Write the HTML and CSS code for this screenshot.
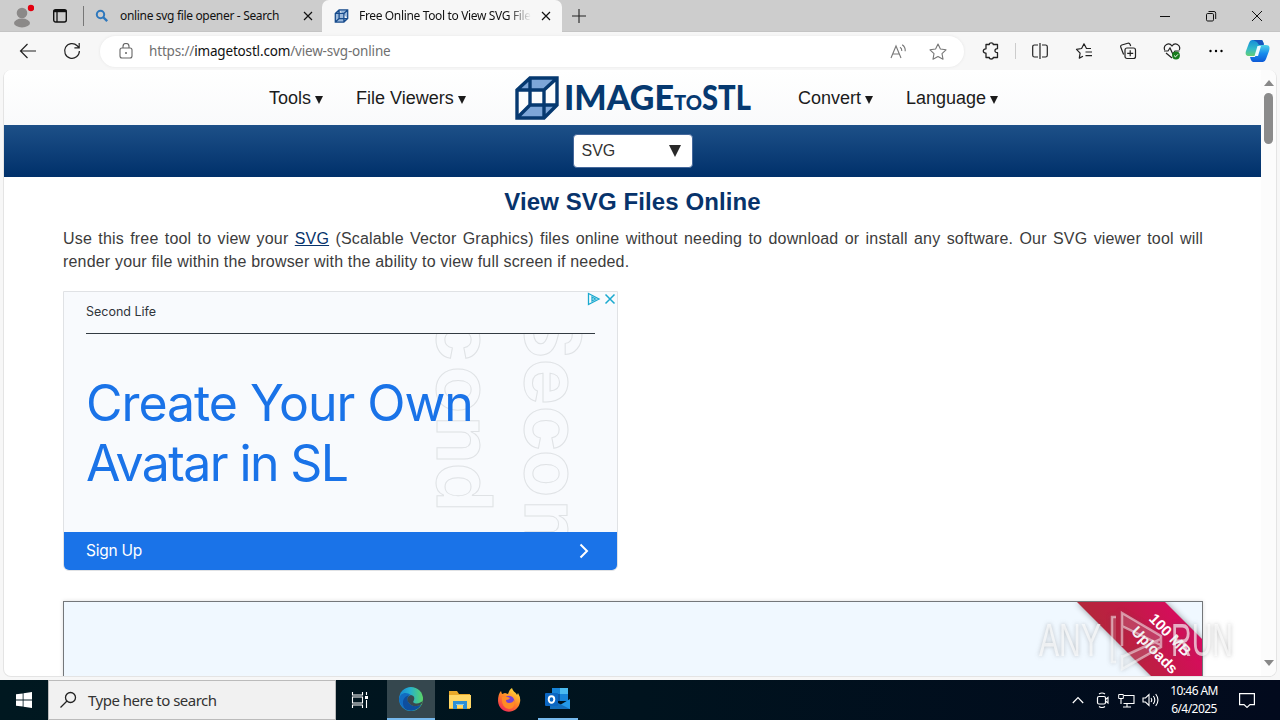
FILE: index.html
```html
<!DOCTYPE html>
<html lang="en">
<head>
<meta charset="utf-8">
<title>Free Online Tool to View SVG Files</title>
<link rel="stylesheet" href="styles.css">
</head>
<body>
<div class="screen">
  <div class="titlebar">
    <svg class="avatar" width="24" height="28" viewBox="0 0 24 28"><circle cx="12" cy="11" r="5.3" fill="#8b8988"/><ellipse cx="12" cy="21" rx="8" ry="4.4" fill="#8b8988"/><circle cx="21" cy="6" r="3.2" fill="#e3000f"/></svg>
    <svg class="workspaces" width="16" height="16" viewBox="0 0 16 16"><rect x="1.7" y="1.7" width="12.6" height="12.3" rx="2" fill="none" stroke="#111" stroke-width="1.4"/><path d="M1.500 3h13" stroke="#111" stroke-width="2.400"/><path d="M5 4v10" stroke="#111" stroke-width="1.300"/></svg>
    <div class="tab tab-idle">
      <svg width="14" height="14" viewBox="0 0 14 14"><circle cx="5.500" cy="5.500" r="3.700" fill="none" stroke="#2e78bd" stroke-width="2"/><path d="M8 8l4.200 4.200" stroke="#2e78bd" stroke-width="2.400"/></svg>
      <span class="tab-title title-search">online svg file opener - Search</span>
      <svg class="tab-x" width="10" height="10" viewBox="0 0 10 10"><path d="M1 1l8 8M9 1L1 9" stroke="#111" stroke-width="1.2"/></svg>
    </div>
    <div class="tab tab-active">
      <svg width="15" height="14" viewBox="0 0 45 44"><path d="M3 14L15 3h27v27L30 41H3zM3 14h27v27M30 14L42 3M15 3v27h27M15 30L3 41" fill="#9bb9dc" stroke="#174b8c" stroke-width="4"/></svg>
      <span class="tab-title title-svg">Free Online Tool to View SVG File</span>
      <svg class="tab-x" width="10" height="10" viewBox="0 0 10 10"><path d="M1 1l8 8M9 1L1 9" stroke="#111" stroke-width="1.2"/></svg>
    </div>
    <svg class="plus" width="14" height="14" viewBox="0 0 14 14"><path d="M7 0v14M0 7h14" stroke="#222" stroke-width="1.1"/></svg>
    <div class="window-controls">
      <svg width="12" height="12" viewBox="0 0 12 12"><path d="M1 6.5h10" stroke="#111"/></svg>
      <svg width="12" height="12" viewBox="0 0 12 12"><rect x="1.5" y="3.5" width="7" height="7.5" rx="1.2" fill="none" stroke="#111"/><path d="M3.5 1.5h5.5a1.7 1.7 0 0 1 1.7 1.7V9" fill="none" stroke="#111"/></svg>
      <svg width="12" height="12" viewBox="0 0 12 12"><path d="M1 1l10 10M11 1L1 11" stroke="#111"/></svg>
    </div>
  </div>

  <div class="toolbar">
    <svg class="back" width="18" height="16" viewBox="0 0 18 16"><path d="M17 8H2M8.5 1L1.5 8l7 7" fill="none" stroke="#222" stroke-width="1.2"/></svg>
    <svg class="reload" width="18" height="18" viewBox="0 0 18 18"><path d="M16.4 9a7.4 7.4 0 1 1-2.2-5.3L16 5.5M16.2 1v4.8h-4.8" fill="none" stroke="#222" stroke-width="1.2"/></svg>
    <div class="address">
      <svg class="lock" width="14" height="16" viewBox="0 0 14 16"><rect x="1" y="5" width="12" height="10" rx="2" fill="none" stroke="#666" stroke-width="1.1"/><path d="M4 5V3.5a3 3 0 0 1 6 0V5" fill="none" stroke="#666" stroke-width="1.1"/><circle cx="7" cy="10" r="1" fill="#666"/></svg>
      <span class="url">https://<b>imagetostl.com</b>/view-svg-online</span>
      <svg class="read" width="17" height="15" viewBox="0 0 17 15"><path d="M1 14L6 2l5 12M2.800 10h6.400M10 3.200q2 1.200 1.800 3.800M12.200 .8q3.400 2.300 3 6.500" fill="none" stroke="#777" stroke-width="1.1"/></svg>
      <svg class="star" width="18" height="17" viewBox="0 0 18 17"><path d="M9 1l2.400 5 5.600.8-4 3.900 1 5.500-5-2.600-5 2.600 1-5.500L1 6.800 6.600 6z" fill="none" stroke="#777" stroke-width="1.1" stroke-linejoin="round"/></svg>
    </div>
    <div class="tools">
      <svg width="18" height="18" viewBox="0 0 18 18"><path d="M4 2.500h3.300c-.3-2.200 4.200-2.200 3.900 0H15.500v4.200c-3.400-.2-3.400 4.200 0 4v4.800h-4.300c.3 2-4.200 2-3.900 0H4v-4.300c-3.600.3-3.600-4.700 0-4.400z" fill="none" stroke="#222" stroke-width="1.300" stroke-linejoin="round"/></svg>
      <i class="separator"></i>
      <svg width="18" height="18" viewBox="0 0 18 18"><path d="M7 3H3.500Q1.700 3 1.700 4.800v8.400Q1.700 15 3.500 15H7M11 3h3.500q1.800 0 1.800 1.800v8.400q0 1.800-1.800 1.800H11M9 1v16" fill="none" stroke="#222" stroke-width="1.2"/></svg>
      <svg width="18" height="18" viewBox="0 0 18 18"><path d="M16 6.500h-4.500L9 1.800 6.600 6.500 1.500 7.400l3.600 3.700-.8 5L8 14.200M10.500 10H17M10.500 13.600H17" fill="none" stroke="#222" stroke-width="1.2" stroke-linejoin="round"/></svg>
      <svg width="18" height="18" viewBox="0 0 18 18"><rect x="6" y="6" width="10.500" height="10.500" rx="2" fill="none" stroke="#222" stroke-width="1.200"/><path d="M11.200 8.300v6M8.200 11.300h6M4.600 12.500L1.800 5.200q-.6-1.600 1-2.200l6-1.800q1.600-.5 2.200 1l.7 1.800" fill="none" stroke="#222" stroke-width="1.200"/></svg>
      <svg width="18" height="18" viewBox="0 0 18 18"><path d="M1.700 8C-.2 3 6-.4 9 4c3-4.400 9.200-1 7.300 4M1 9h4l2-3 2.800 6L12 9h4.500M3 11l6 5" fill="none" stroke="#222" stroke-width="1.200"/><circle cx="13" cy="13.500" r="3.900" fill="#187c1d"/><path d="M11 13.500l1.500 1.400 2.500-2.600" fill="none" stroke="#fff"/></svg>
      <svg width="18" height="18" viewBox="0 0 18 18"><circle cx="3.500" cy="9" r="1.200"/><circle cx="9" cy="9" r="1.200"/><circle cx="14.500" cy="9" r="1.200"/></svg>
      <svg class="copilot" width="26" height="24" viewBox="0 0 26 24"><defs><linearGradient id="cl" x1="0" y1="0" x2="0" y2="1"><stop offset="0" stop-color="#158bd8"/><stop offset=".55" stop-color="#32baca"/><stop offset="1" stop-color="#65cf74"/></linearGradient><linearGradient id="cr" x1="0" y1="0" x2="0" y2="1"><stop offset="0" stop-color="#50d3e8"/><stop offset=".5" stop-color="#178ced"/><stop offset="1" stop-color="#0d59d7"/></linearGradient></defs><path d="M7 1h9c2 0 2 2 3 4h-4l-5 12H4c-3 0-4-2-3-5L4 4q1-3 3-3z" fill="url(#cl)"/><path d="M18 23H9c-2 0-3-1-4-5h5l4-12h7c4 0 4 3 3 6l-3 8q-1 3-3 3z" fill="url(#cr)"/><path d="M12.500 7h3.500l-3 10H9.500z" fill="#edfaff"/><path d="M8 1h8c2 0 2 2 3 5h-5l-2-3z" fill="#1755bd"/></svg>
    </div>
  </div>

  <div class="viewport">
    <main class="page">
      <nav class="nav">
        <span class="menu m-tools">Tools<i></i></span>
        <span class="menu m-files">File Viewers<i></i></span>
        <svg class="logo" width="238" height="46" viewBox="0 0 238 46">
          <path d="M3 15L16 3h28L31 15zM3 43l13-13h28L31 43z" fill="#7da6d8"/>
          <path d="M3 15L16 3h27v27L30 43H3zM3 15h27v28M30 15L43 3M16 3v27h27M16 30L3 43" fill="none" stroke="#063970" stroke-width="3.400"/>
          <text x="50" y="35" class="logo-text" textLength="110" lengthAdjust="spacingAndGlyphs">IMAGE</text>
          <text x="160" y="35" class="logo-text logo-small" textLength="28" lengthAdjust="spacingAndGlyphs">TO</text>
          <text x="188" y="35" class="logo-text" textLength="49" lengthAdjust="spacingAndGlyphs">STL</text>
        </svg>
        <span class="menu m-convert">Convert<i></i></span>
        <span class="menu m-language">Language<i></i></span>
      </nav>
      <div class="band"><div class="select"><span>SVG</span><i></i></div></div>
      <h1>View SVG Files Online</h1>
      <p class="intro">Use this free tool to view your <a>SVG</a> (Scalable Vector Graphics) files online without needing to download or install any software. Our SVG viewer tool will <span>render your file within the browser with the ability to view full screen if needed.</span></p>
      <section class="ad">
        <div class="ad-body">
          <svg class="ad-art" width="170" height="198" viewBox="430 334 170 198">
            <g class="outline"><text transform="translate(437 0) rotate(90)" x="316 366 416 463" y="0">cond</text><text transform="translate(525 0) rotate(90)" x="308 359 406 450 500" y="0">Secon</text></g>
          </svg>
          <svg class="ad-choice" width="30" height="14" viewBox="0 0 30 14"><path d="M1.500 1.500v11L12 7zM5 5v4l3.500-2z" fill="none" stroke="#19a9cf" stroke-width="1.300"/><path d="M18.500 2.500l9 9M27.500 2.500l-9 9" stroke="#19a9cf" stroke-width="1.500"/></svg>
          <div class="advertiser">Second Life</div>
          <div class="headline"><div class="h-one">Create Your Own</div><div class="h-two">Avatar in SL</div></div>
        </div>
        <div class="ad-action"><span>Sign Up</span><svg width="10" height="16" viewBox="0 0 10 16"><path d="M1.500 1.500L8 8l-6.500 6.500" fill="none" stroke="#fff" stroke-width="2"/></svg></div>
      </section>
      <section class="dropzone">
        <svg class="ribbon" width="134" height="80" viewBox="1069 602 134 80">
          <defs><linearGradient id="rb" gradientUnits="userSpaceOnUse" x1="1100" y1="660" x2="1190" y2="610"><stop offset="0" stop-color="#b02a38"/><stop offset=".45" stop-color="#c01c45"/><stop offset="1" stop-color="#dc0862"/></linearGradient></defs>
          <path class="ribbon-shape" d="M1078 602h88l37 37v43h-45z" fill="url(#rb)"/>
          <g class="ribbon-text"><text transform="translate(1167.500 638.500) rotate(46)">100 MB</text><text transform="translate(1152 653.500) rotate(46)">Uploads</text></g>
        </svg>
      </section>
    </main>
    <div class="scrollbar"><i class="up"></i><i class="thumb"></i><i class="down"></i></div>
  </div>

  <svg class="watermark" width="204" height="72" viewBox="1034 604 204 72">
    <g class="mark"><text x="1039" y="656" textLength="62" lengthAdjust="spacingAndGlyphs">ANY</text><text x="1171" y="656" textLength="62" lengthAdjust="spacingAndGlyphs">RUN</text></g>
    <path d="M1116 617h-4v45h4M1122 613l39 23v9l-39-19zM1122 613v33M1122 655v14l39-22v-8l-39 18" fill="rgba(255,255,255,.14)" stroke="rgba(255,255,255,.5)" stroke-width="2.500"/>
  </svg>

  <div class="taskbar">
    <div class="start"><svg width="16" height="16" viewBox="0 0 16 16"><path d="M0 2.300L6.700 1.400v6.200H0zM7.500 1.300L16 0v7.600H7.500zM0 8.400h6.700v6.200L0 13.700zM7.500 8.400H16V16l-8.500-1.300z" fill="#fff"/></svg></div>
    <div class="search"><svg width="18" height="18" viewBox="0 0 18 18"><circle cx="10.500" cy="6.500" r="5" fill="none" stroke="#222" stroke-width="1.300"/><path d="M7 10L.5 16.500" stroke="#222" stroke-width="1.300"/></svg><span>Type here to search</span></div>
    <div class="app"><svg width="18" height="18" viewBox="0 0 18 18"><path d="M1.500 1v3h10V1M1.500 17v-3h10v3M1.500 6h10v6h-10zM15.500 1v3M15.500 9v8" fill="none" stroke="#fff" stroke-width="1.100"/><path d="M14 5h3v3h-3z" fill="#fff"/></svg></div>
    <div class="app edge"><svg width="26" height="26" viewBox="0 0 26 26"><defs><linearGradient id="eg" x1="0" y1=".3" x2="1" y2=".3"><stop offset="0" stop-color="#1688d2"/><stop offset=".45" stop-color="#25afd0"/><stop offset="1" stop-color="#5ad566"/></linearGradient></defs><circle cx="13" cy="13" r="12" fill="url(#eg)"/><path d="M1 13C2 7 8 5 13 9c-4 0-5 5-2 8 3 4 8 4 12 1.500C20 26 3 28 1 13z" fill="#126cc0"/><path d="M7 23C2 15 7 9 13 9c-4 0-5 5-2 8 3 4 8 4 12 1.500-3 6-10 8-16 4.500z" fill="#0e4e9d"/><path d="M13 9c4 1 4 4 2 7 3 3 8 1 9.800-1.500-.3 1.800-.8 3-1.800 4-4 2.500-9 2.500-12-1.500-3-3-2-7 2-8z" fill="#39484f"/></svg></div>
    <div class="app"><svg width="22" height="20" viewBox="0 0 22 20"><path d="M0 1h8l2 3h11v15H0z" fill="#e9a929"/><path d="M0 5h22v13H0z" fill="#ffd766"/><path d="M4 11h14v8h-4v-4H8v4H4z" fill="#2d8fd6"/><path d="M7 14h8v1H7z" fill="#82c7f1"/></svg></div>
    <div class="app"><svg width="24" height="24" viewBox="0 0 24 24"><defs><linearGradient id="fg" x1=".8" y1="0" x2=".2" y2="1"><stop offset="0" stop-color="#ffe33c"/><stop offset=".5" stop-color="#ff8427"/><stop offset="1" stop-color="#f12458"/></linearGradient></defs><path d="M1 13Q1 6 4 3l1 3 3-1 3 1c1-3 2-5 4-6 1 4 4 4 5 7l1-2q3 5 2 9c-2 13-21 13-22-1z" fill="url(#fg)"/><circle cx="12" cy="13" r="5.300" fill="#7641d5"/><path d="M5 9q5-1 8 1-1 2-4 2 0 3 3 3 4 0 5-3 2 8-5 9-8-1-7-12z" fill="#ff8b25"/></svg></div>
    <div class="app outlook"><svg width="26" height="22" viewBox="0 0 26 22"><path d="M7 0h16v13H7z" fill="#1784d8"/><path d="M15 0h8v6h-8z" fill="#4abaf0"/><path d="M7 6h8v7H7z" fill="#0a57a6"/><path d="M5 11l10 6 10-6v10H5z" fill="#2499e8"/><path d="M5 11l20 10H5z" fill="#146fbd"/><rect y="5" width="13" height="13" rx="1" fill="#0b66c2"/><ellipse cx="6.500" cy="11.500" rx="2.800" ry="3.200" fill="none" stroke="#fff" stroke-width="1.900"/></svg></div>
    <div class="tray">
      <svg width="12" height="8" viewBox="0 0 12 8"><path d="M.8 7L6 1.500 11.200 7" fill="none" stroke="#fff" stroke-width="1.200"/></svg>
      <svg width="14" height="16" viewBox="0 0 14 16"><rect x="1.500" y="4.500" width="8" height="7.500" rx="1.500" fill="none" stroke="#fff" stroke-width="1.200"/><path d="M9.500 7.500L12 5.500v5.500L9.500 9M3 2q3-2 6 0M3 14.500q3 2 6 0" fill="none" stroke="#fff" stroke-width="1.100"/></svg>
      <svg width="17" height="15" viewBox="0 0 17 15"><path d="M6 2.500h10v8H5.500M5 14h8M9 10.500V14M3 6v5" fill="none" stroke="#fff" stroke-width="1.100"/><path d="M.7 1.500h4.600v4H.7z" fill="none" stroke="#fff"/></svg>
      <svg width="17" height="14" viewBox="0 0 17 14"><path d="M1 5h2.500L7 1.500v11L3.500 9H1zM9 5q1.500 2 0 4M11.300 3q3 4 0 8M13.700 1q4.500 6 0 12" fill="none" stroke="#fff" stroke-width="1.100"/></svg>
      <div class="clock"><span class="time">10:46 AM</span><span class="date">6/4/2025</span></div>
      <svg class="notice" width="16" height="16" viewBox="0 0 16 16"><path d="M.6 1.600h14.800v11H11L8 15.400 5 12.600H.6z" fill="none" stroke="#fff" stroke-width="1.200"/></svg>
    </div>
  </div>
</div>
</body>
</html>
```
FILE: styles.css
```css
* { box-sizing: border-box; }
body { margin: 0; font-family: "Liberation Sans", Arial, sans-serif; }
svg { display: block; flex: none; }
.screen { position: relative; width: 1280px; height: 720px; overflow: hidden; background: #f7f7f7; display: flex; flex-direction: column; }
.titlebar { height: 32px; flex: none; display: flex; align-items: center; background: #cdcdcd; font: 12px "Noto Sans", "Open Sans", sans-serif; border-bottom: 1px solid #c4c4c4; }
.avatar { margin-left: 10px; }
.workspaces { margin-left: 18px; }
.tab { display: flex; align-items: center; height: 32px; flex: none; }
.tab-idle { width: 239px; margin-left: 15px; padding-left: 12px; background: linear-gradient(#777, #777) left center / 1px 20px no-repeat; }
.tab-title { white-space: nowrap; color: #111; overflow: hidden; }
.title-search { width: 180px; margin-left: 11px; letter-spacing: -.33px; }
.title-svg { width: 172px; margin-left: 10px; letter-spacing: -.35px; -webkit-mask-image: linear-gradient(90deg, #000 87%, transparent); mask-image: linear-gradient(90deg, #000 87%, transparent); }
.tab-idle .tab-x { margin-left: 3px; }
.tab-active { width: 240px; padding-left: 12px; background: #f7f7f7; border-radius: 7px 7px 0 0; }
.tab-active .tab-x { margin-left: 10px; }
.plus { margin-left: 10px; }
.window-controls { display: flex; gap: 34px; margin: 0 17px 0 auto; }
.toolbar { height: 38px; flex: none; display: flex; align-items: center; }
.back { margin-left: 19px; }
.reload { margin-left: 26px; }
.address { width: 864px; height: 31px; margin-left: 19px; padding-left: 19px; display: flex; align-items: center; border-radius: 16px; background: #fff; box-shadow: 0 0 3px #e5e5e5; }
.url { width: 741px; margin-left: 16px; font: 13.500px "Noto Sans", "Open Sans", sans-serif; letter-spacing: -.17px; color: #707070; }
.url b { font-weight: 400; color: #111; }
.star { margin-left: 22px; }
.tools { display: flex; align-items: center; margin-left: 18px; }
.tools > svg { margin-right: 26px; }
.separator { width: 1px; height: 16px; background: #ccc; margin: 0 15px 0 -11px; }
.tools > .copilot { margin: 0 0 0 -6px; }

.viewport { width: 1274px; height: 607px; margin-left: 3px; flex: none; display: flex; overflow: hidden; border: 1px solid #e4e4e4; border-top: 0; border-radius: 8px; background: #fff; }
.page { width: 1257px; overflow: hidden; flex: none; }
.nav { height: 55px; display: flex; align-items: center; background: linear-gradient(#fff, #f9fafb); color: #1b1b1b; font-size: 18px; }
.menu { display: flex; align-items: center; white-space: nowrap; padding-top: 2px; }
.menu i { margin: 3px 0 0 4px; border: 4px solid transparent; border-top: 8px solid #1b1b1b; border-bottom: 0; }
.m-tools { width: 87px; margin-left: 265px; }
.m-files { width: 158px; }
.m-convert { width: 108px; margin-left: 46px; }
.logo-text { font: 900 34px Lato, sans-serif; fill: #063970; }
.logo-small { font-size: 21px; }
.band { height: 52px; display: flex; justify-content: center; align-items: center; background: linear-gradient(#1d5088, #00306a); }
.select { width: 120px; height: 34px; padding: 0 11px 0 8px; display: flex; align-items: center; justify-content: space-between; background: #fff; border: 1px solid #45689b; border-radius: 4px; color: #333; font-size: 16px; }
.select i { border: 6px solid transparent; border-top: 12px solid #292929; border-bottom: 0; }
h1 { margin: 11px 0 0; font-size: 24px; line-height: 28px; text-align: center; color: #07336b; letter-spacing: .1px; }
.intro { width: 1140px; margin: 11px 0 0 59px; font-size: 16px; line-height: 23px; color: #3c3c3c; text-align: justify; letter-spacing: .18px; }
.intro span { display: inline-block; }
.intro a { color: #07336b; text-decoration: underline; }
.ad { width: 555px; height: 280px; margin: 18px 0 0 59px; border: 1px solid #e0e2e5; border-radius: 0 0 6px 6px; overflow: hidden; background: #f8fafd; font-family: Inter, sans-serif; }
.ad-body { position: relative; height: 240px; padding: 0 22px; }
.advertiser { position: relative; height: 42px; padding-top: 12px; border-bottom: 1px solid #333b42; font-size: 12.500px; line-height: 16px; color: #30353b; }
.ad-art { position: absolute; left: 366px; top: 42px; }
.outline { font: 700 77px Inter, sans-serif; fill: none; stroke: #dfe2e5; stroke-width: 1; }
.ad-choice { position: absolute; right: 0; top: 0; }
.headline { position: relative; margin-top: 39px; font-size: 50px; line-height: 60px; color: #1a73e8; white-space: nowrap; }
.h-one { letter-spacing: -1.05px; }
.h-two { letter-spacing: -1.6px; }
.ad-action { height: 38px; padding: 0 28px 0 22px; display: flex; align-items: center; justify-content: space-between; background: #1a73e8; color: #fff; font-size: 15.500px; letter-spacing: -.25px; }
.ad-action span { padding-bottom: 1px; }
.dropzone { width: 1140px; height: 160px; margin: 30px 0 0 59px; display: flex; justify-content: flex-end; border: 1px solid #74777a; background: #f0f8ff; overflow: hidden; box-shadow: 0 0 4px #ddd; }
.ribbon-shape { filter: drop-shadow(0 0 3px rgba(0,0,0,.4)); }
.ribbon-text { font: 700 15px "Liberation Sans", sans-serif; fill: #fff; text-anchor: middle; }
.scrollbar { width: 15px; flex: none; display: flex; flex-direction: column; align-items: center; background: #fcfcfc; }
.up { margin-top: 10px; border: 5px solid transparent; border-top: 0; border-bottom: 6px solid #888; }
.thumb { width: 9px; height: 51px; margin-top: 7px; border-radius: 5px; background: #8b8b8b; }
.down { margin: auto 0 10px; border: 5px solid transparent; border-bottom: 0; border-top: 6px solid #888; }
.watermark { position: absolute; left: 1034px; top: 604px; filter: drop-shadow(0 0 2px rgba(80,80,80,.5)); }
.mark { font: 400 46px "Liberation Sans", sans-serif; fill: rgba(255,255,255,.65); }

.taskbar { height: 40px; margin-top: auto; flex: none; display: flex; background: linear-gradient(90deg, #001820, #00131e 50%, #020a1d); color: #fff; }
.start { width: 48px; display: flex; align-items: center; justify-content: center; }
.search { width: 288px; padding-left: 11px; display: flex; align-items: center; gap: 10px; background: #f1f1f1; border: 1px solid #bbb; color: #333; font: 15px "Noto Sans", "Open Sans", sans-serif; letter-spacing: -.5px; }
.app { width: 48px; margin-right: 1px; display: flex; align-items: center; justify-content: center; }
.app:nth-child(3) { width: 50px; padding-right: 2px; }
.edge { background: #35474e; border-bottom: 2px solid #76b9ed; }
.outlook { width: 40px; margin-left: 4px; border-bottom: 2px solid #76b9ed; }
.tray { margin-left: auto; display: flex; align-items: center; gap: 12px; padding-right: 25px; }
.tray svg:nth-child(3) { margin-left: -4px; }
.tray svg:nth-child(4) { margin-left: -5px; }
.clock { width: 52px; margin-left: -3px; display: flex; flex-direction: column; align-items: center; white-space: nowrap; font: 12px/18px "Noto Sans", "Open Sans", sans-serif; }
.time { letter-spacing: -.6px; }
.date { letter-spacing: -.55px; }
.notice { margin-left: 7px; }
```
